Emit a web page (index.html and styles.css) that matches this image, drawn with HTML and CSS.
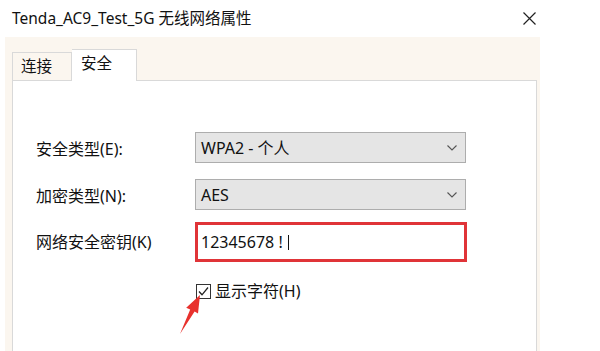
FILE: index.html
```html
<!DOCTYPE html>
<html lang="zh-CN">
<head>
<meta charset="utf-8">
<title>Tenda_AC9_Test_5G 无线网络属性</title>
<link rel="stylesheet" href="styles.css">
</head>
<body>
<div class="window">
  <div class="titlebar">
    <span class="title">Tenda_AC9_Test_5G 无线网络属性</span>
    <svg class="close" width="13" height="13" viewBox="0 0 13 13"><path d="M0.5 0.5 L12.5 12.5 M12.5 0.5 L0.5 12.5" stroke="#222" stroke-width="1.2" fill="none"/></svg>
  </div>
  <div class="client">
    <div class="tabs">
      <div class="tab">连接</div>
      <div class="tab active">安全</div>
    </div>
    <div class="panel">
      <div class="row r1">
        <label class="lbl">安全类型(E):</label>
        <div class="select">
          <span>WPA2 - 个人</span>
          <svg class="chev" width="10" height="6" viewBox="0 0 10 6"><path d="M0.5 0.5 L5 5 L9.5 0.5" stroke="#555" stroke-width="1.1" fill="none"/></svg>
        </div>
      </div>
      <div class="row r2">
        <label class="lbl">加密类型(N):</label>
        <div class="select">
          <span>AES</span>
          <svg class="chev" width="10" height="6" viewBox="0 0 10 6"><path d="M0.5 0.5 L5 5 L9.5 0.5" stroke="#555" stroke-width="1.1" fill="none"/></svg>
        </div>
      </div>
      <div class="row r3">
        <label class="lbl">网络安全密钥(K)</label>
        <div class="keybox">
          <span>12345678 !</span><span class="caret"></span>
        </div>
      </div>
      <div class="row r4">
        <span class="lbl"></span>
        <div class="check">
          <span class="box"><svg width="13" height="13" viewBox="0 0 13 13"><path d="M2 6.5 L5 9.8 L11 2.5" stroke="#222" stroke-width="1.3" fill="none"/></svg></span>
          <span>显示字符(H)</span>
        </div>
      </div>
    </div>
  </div>
</div>
<svg class="arrow" width="30" height="45" viewBox="175 292 30 45"><polygon points="200,295 198,313.5 194.6,311.6 180,334 190.2,309.4 186.2,307.8" fill="#e8312d"/></svg>
</body>
</html>
```
FILE: styles.css
```css
html, body {
  margin: 0;
  padding: 0;
  background: #ffffff;
}
body {
  position: relative;
  width: 600px;
  height: 351px;
  overflow: hidden;
  font-family: "Noto Sans", "Noto Sans CJK SC", sans-serif;
  font-size: 16px;
  color: #111111;
}
.window {
  width: 540px;
}
.titlebar {
  height: 37px;
  display: flex;
  align-items: center;
  justify-content: space-between;
  padding: 0 4px 0 12px;
  box-sizing: border-box;
}
.title {
  font-size: 15.5px;
  line-height: 20px;
  margin-top: -1px;
  color: #111111;
}
.close {
  display: block;
  margin-top: -1px;
}
.client {
  margin-left: 5px;
  height: 314px;
  background: #fbf6ef;
  padding: 12px 3px 0 7px;
  box-sizing: border-box;
  display: flex;
  flex-direction: column;
}
.tabs {
  display: flex;
  align-items: flex-end;
  height: 31px;
  position: relative;
  z-index: 1;
}
.tab {
  width: 60px;
  height: 28px;
  box-sizing: border-box;
  border: 1px solid #d9d9d9;
  border-bottom: none;
  background: #fbf6ef;
  padding-left: 8px;
  line-height: 27px;
  font-size: 15.5px;
}
.tab.active {
  width: 65px;
  height: 32px;
  margin-bottom: -1px;
  background: #ffffff;
  border-left: none;
  padding-left: 9px;
  line-height: 27px;
}
.panel {
  flex: 1;
  background: #ffffff;
  border: 1px solid #d9d9d9;
  border-bottom: none;
  padding: 51px 0 0 23px;
}
.row {
  display: flex;
  align-items: center;
}
.r2 { margin-top: 16px; }
.r3 { margin-top: 12px; }
.r4 { margin-top: 19px; }
.lbl {
  width: 159px;
  flex: none;
  line-height: 20px;
  margin-top: 3px;
}
.r3 .lbl { margin-top: -1px; }
.r4 .lbl { margin-top: 0; }
.select {
  height: 31px;
  box-sizing: border-box;
  background: #e5e5e5;
  border: 1px solid #adadad;
  width: 271px;
  display: flex;
  align-items: center;
  justify-content: space-between;
  padding: 0 8px 0 5px;
}
.select span {
  line-height: 20px;
}
.chev {
  display: block;
  margin-top: 1px;
}
.keybox {
  width: 272px;
  height: 40px;
  box-sizing: border-box;
  border: 3px solid #e03438;
  display: flex;
  align-items: center;
  padding-left: 3px;
}
.keybox span {
  line-height: 20px;
}
.caret {
  display: inline-block;
  width: 1px;
  height: 15px;
  background: #111;
  margin-left: 5px;
}
.check {
  display: flex;
  align-items: center;
  gap: 4px;
  padding-left: 1px;
}
.box {
  width: 15px;
  height: 15px;
  box-sizing: border-box;
  border: 1px solid #333;
  display: flex;
  align-items: center;
  justify-content: center;
  background: #fff;
}
.box svg {
  display: block;
}
.check span:last-child {
  line-height: 20px;
}
.arrow {
  position: absolute;
  left: 175px;
  top: 292px;
}
```
